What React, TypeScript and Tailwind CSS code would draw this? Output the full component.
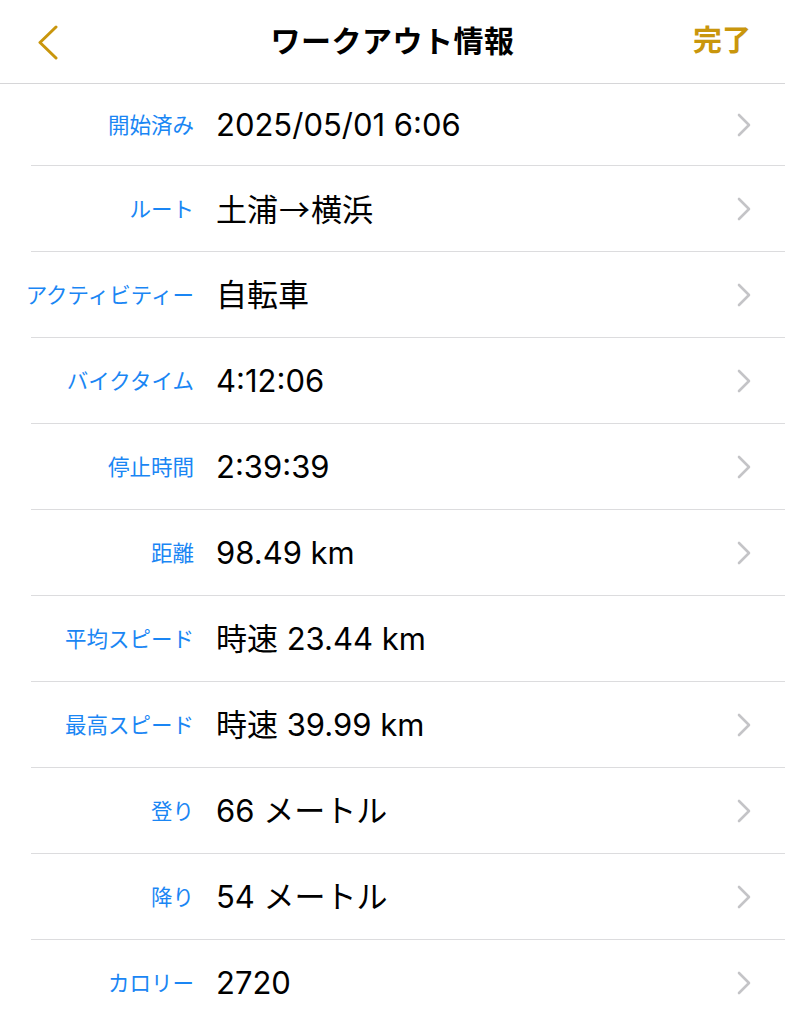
import React from "react";

const rows: { label: string; value: React.ReactNode; chevron: boolean }[] = [
  { label: "開始済み", value: "2025/05/01 6:06", chevron: true },
  {
    label: "ルート",
    value: (
      <>
        土浦
        <span className="mx-[1px]" style={{ fontFamily: '"Noto Sans CJK JP", sans-serif' }}>
          →
        </span>
        横浜
      </>
    ),
    chevron: true,
  },
  { label: "アクティビティー", value: "自転車", chevron: true },
  { label: "バイクタイム", value: "4:12:06", chevron: true },
  { label: "停止時間", value: "2:39:39", chevron: true },
  { label: "距離", value: "98.49 km", chevron: true },
  { label: "平均スピード", value: "時速 23.44 km", chevron: false },
  { label: "最高スピード", value: "時速 39.99 km", chevron: true },
  { label: "登り", value: "66 メートル", chevron: true },
  { label: "降り", value: "54 メートル", chevron: true },
  { label: "カロリー", value: "2720", chevron: true },
];

const font = {
  fontFamily:
    '"Liberation Sans", "Noto Sans CJK JP", "Noto Sans", sans-serif',
};

const valueFont = {
  fontFamily: 'Inter, "Noto Sans CJK JP", "Noto Sans", sans-serif',
};

function Chevron() {
  return (
    <svg width="16" height="26" viewBox="0 0 16 26" className="mr-[33px] shrink-0">
      <path
        d="M3 3 L13 13 L3 23"
        fill="none"
        stroke="#c4c4c7"
        strokeWidth="2.6"
        strokeLinecap="round"
        strokeLinejoin="round"
      />
    </svg>
  );
}

export default function App() {
  return (
    <div className="w-[785px] min-h-[1024px] bg-white overflow-hidden" style={font}>
      <div className="h-[84px] flex items-center justify-between relative border-b border-[#d6d6d8]">
        <svg width="24" height="36" viewBox="0 0 24 36" className="ml-[36px]">
          <path
            d="M20 3 L4 18.5 L20 34"
            fill="none"
            stroke="#c9960c"
            strokeWidth="3"
            strokeLinecap="round"
            strokeLinejoin="round"
          />
        </svg>
        <div className="absolute inset-0 flex items-center justify-center pointer-events-none">
          <span className="text-[30px] font-bold text-black leading-none tracking-[0.5px]">
            ワークアウト情報
          </span>
        </div>
        <span className="mr-[34px] text-[29px] font-semibold text-[#c9960c] leading-none">
          完了
        </span>
      </div>
      {rows.map((r, i) => (
        <div key={i}>
          <div className={`flex items-center ${i === 0 ? "h-[81px]" : "h-[85px]"}`}>
            <div className="w-[194px] shrink-0 mt-[4px] text-right text-[21.5px] text-[#1a86f4] whitespace-nowrap leading-none">
              {r.label}
            </div>
            <div
              className="ml-[22px] flex-1 text-[31px] text-black leading-none whitespace-nowrap"
              style={valueFont}
            >
              {r.value}
            </div>
            {r.chevron && <Chevron />}
          </div>
          <div className="ml-[31px] h-px bg-[#dcdcde]" />
        </div>
      ))}
    </div>
  );
}
